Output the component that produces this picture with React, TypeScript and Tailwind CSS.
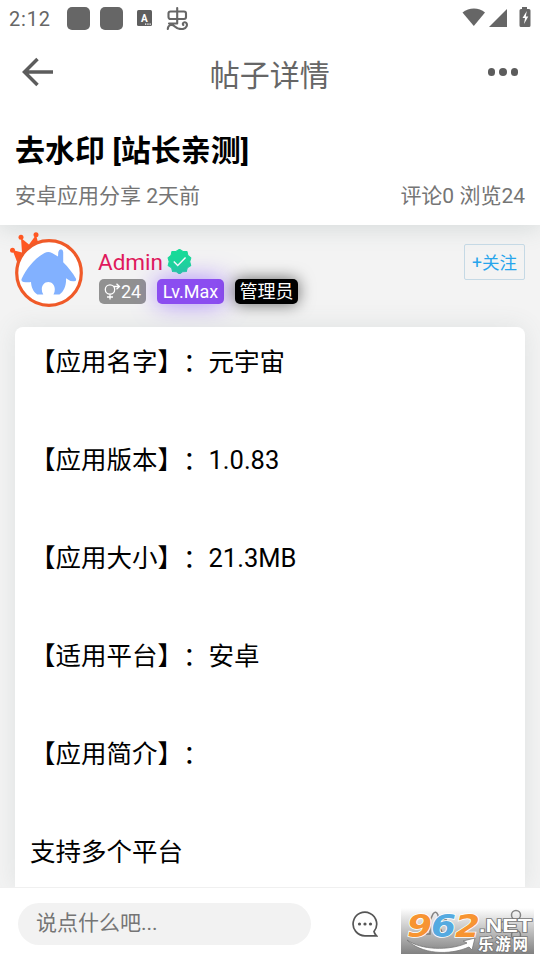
import { clsx } from "clsx"

const lines = [
  "【应用名字】：元宇宙",
  "【应用版本】：1.0.83",
  "【应用大小】：21.3MB",
  "【适用平台】：安卓",
  "【应用简介】：",
  "支持多个平台",
]

function StatusBar() {
  return (
    <div className="flex h-9 shrink-0 items-center justify-between pl-[9px] pr-[9px] text-[#666]">
      <div className="flex h-full items-center">
        <span className="w-[58px] pt-[1px] text-[20px] leading-none tracking-[0.8px]">2:12</span>
        <span className="size-[23px] rounded-[5px] bg-[#666]" />
        <span className="ml-[10px] size-[23px] rounded-[5px] bg-[#666]" />
        <svg className="ml-[14px]" width="15" height="16" viewBox="0 0 15 16">
          <rect width="15" height="16" rx="1.5" fill="#5e5e5e" />
          <text x="7.3" y="11.5" textAnchor="middle" fontSize="10" fontWeight="700" fill="#fff">A</text>
          <path d="M8 14.2h1.3M10.3 14.2h1.3M12.5 14.2h1.3" stroke="#fff" strokeWidth="1.2" />
        </svg>
        <svg className="ml-[14px]" width="24" height="24" viewBox="0 0 24 24" fill="none" stroke="#666" strokeWidth="2.1" strokeLinecap="round">
          <rect x="2.500" y="5.500" width="17.500" height="7.500" rx="2" />
          <path d="M11.200 2v15.500M3 17.500h8.200M1.800 23c.2-4 4-5.500 7-2.500 2 2 5 2.800 8 2.500 4-.4 5-4.500 3.300-6.200-1.800-1.500-4.300.5-2.800 2.200" />
        </svg>
      </div>
      <svg className="-mt-[2px]" width="70" height="24" viewBox="0 0 70 24" fill="#666">
        <path d="M1.500 7.500C8 2 18 2 24 7.500L12.800 21Z" />
        <path d="M46 4v18H28Z" />
        <path d="M61 4V2h5v2h2q1.500 0 1.500 1.500v15q0 1.500-1.500 1.500h-8q-1.500 0-1.500-1.500v-15Q58.500 4 60 4Z" />
        <path d="m65.800 6-4.300 7h2.500l-1 6 4.300-7.500h-2.500Z" fill="#fff" />
      </svg>
    </div>
  )
}

function Avatar() {
  return (
    <svg className="shrink-0" width="76" height="80" viewBox="0 0 76 80">
      <path d="M11 35 4.500 18l9.500 2.500L13 6l8 6.500L28 3l2.500 9L33 18Z" fill="#ff5722" />
      <circle cx="4.500" cy="18.300" r="2.500" fill="#ff5722" />
      <circle cx="13" cy="5.200" r="2.500" fill="#ff5722" />
      <circle cx="28" cy="2.800" r="2.500" fill="#ff5722" />
      <circle cx="41" cy="41" r="32.300" fill="#fff" stroke="#f05a28" strokeWidth="3.200" />
      <path
        d="M36.500 21q3.800-2 7.500 0l6 3.500.3-4.500q.7-2.800 2.700-2.800t2.200 2.800V30.300c5 5 9.500 10.500 12.800 16.500q.7 2.400-2 2.500-4 .3-8-3c.5 7-2 13-6.500 16.300h-6q1.300-1.500 1.300-5.300c0-4-2.500-7.300-6.500-7.300s-6.500 3.300-6.500 7.300q0 3.800 1.500 5.300h-6c-4.500-3-6-8-6.300-12.500q-4 .5-7.500-.2-3-.5-1.700-3.300C18 37 27 26 36.500 21Z"
        fill="#82b1ff"
      />
    </svg>
  )
}

function VerifiedBadge() {
  return (
    <svg width="25" height="25" viewBox="0 0 24 24">
      <path
        d="m12 .3 3.300 2 3.900.1.800 3.700 2.900 2.500-1.100 3.600 1 3.700-3.300 2.200-1 3.600-3.900.2-2.600 2.100-2.700-2.100-3.900-.2-1-3.600-3.300-2.200 1-3.700L1 8.600l2.900-2.500.8-3.700 3.900-.1Z"
        fill="#19db98"
        stroke="#19db98"
        strokeLinejoin="round"
      />
      <path d="m6.500 12 3.800 3.800 7.500-7.600" fill="none" stroke="#fff" strokeWidth="1.400" />
    </svg>
  )
}

function GenderIcon() {
  return (
    <svg width="17" height="18" viewBox="0 0 17 18" fill="none" stroke="#fff" strokeWidth="1.300">
      <circle cx="6" cy="6.500" r="4.700" />
      <path d="M6 11.200v5.300M3 14h6M9.500 3.500H15M12.500.700l3 2.800-3 2.800" />
    </svg>
  )
}

function Watermark() {
  return (
    <svg className="absolute left-[401px] top-[908px] overflow-visible" width="133" height="46" viewBox="0 0 133 46">
      <defs>
        <linearGradient id="shade" x1="0" y1="0" x2="0" y2="1">
          <stop offset="0" stopColor="#6b6b6b" stopOpacity="0" />
          <stop offset="1" stopColor="#6b6b6b" stopOpacity="0.850" />
        </linearGradient>
      </defs>
      <g fill="none" stroke="#888" strokeWidth="1.500">
        <path d="M24 24 32 6q3-4 5 1v4l9 1M25 26h4v-8M41 24l-3-6" />
        <circle cx="115" cy="7" r="4.500" />
        <circle cx="103" cy="18" r="4.500" />
        <circle cx="115" cy="27" r="4.500" />
      </g>
      <rect width="133" height="46" fill="url(#shade)" />
      <g fontFamily="DejaVu Sans" fontWeight="700" fontStyle="italic" fontSize="32" stroke="#fff" strokeWidth="1.600" paintOrder="stroke">
        <text x="6" y="29" fill="#f79432" textLength="25" lengthAdjust="spacingAndGlyphs">9</text>
        <text x="30" y="29" fill="#55aae0" textLength="25" lengthAdjust="spacingAndGlyphs">6</text>
        <text x="54" y="29" fill="#f79432" textLength="25" lengthAdjust="spacingAndGlyphs">2</text>
      </g>
      <path d="M6 32C20 42 48 43 66 35l-4-2 12-3-3 12-3-3C48 48 20 46 6 32Z" fill="#fff" stroke="#777" strokeWidth=".8" />
      <g fill="#fff" stroke="#777" strokeWidth="1.600" paintOrder="stroke" fontWeight="700">
        <text x="78" y="24" fontFamily="Liberation Sans" fontSize="18.500" textLength="53" lengthAdjust="spacingAndGlyphs">.NET</text>
        <text x="77" y="41.500" fontFamily="Noto Sans CJK SC" fontSize="15.500" textLength="50">乐游网</text>
      </g>
    </svg>
  )
}

export default function App() {
  return (
    <div className="relative flex h-[960px] w-[540px] flex-col overflow-hidden bg-[#f3f3f3] font-['Roboto','Noto_Sans_CJK_SC',sans-serif] text-black [text-spacing-trim:space-all]">
      <header className="relative z-10 flex h-[225px] shrink-0 flex-col bg-white shadow-[0_3px_22px_rgba(80,105,105,0.18)]">
        <StatusBar />
        <div className="flex h-[72px] items-center justify-between pl-[22px] pr-[22px]">
          <svg width="32" height="30" viewBox="0 0 32 30" fill="none" stroke="#5c5c5c" strokeWidth="3.500">
            <path d="M31 15H3.500M15.500 2 2.500 15l13 13" />
          </svg>
          <h1 className="-ml-[2px] pt-[7px] text-[30px] leading-none text-[#666]">帖子详情</h1>
          <div className="flex gap-[4px]">
            <span className="size-[7.500px] rounded-full bg-[#5c5c5c]" />
            <span className="size-[7.500px] rounded-full bg-[#5c5c5c]" />
            <span className="size-[7.500px] rounded-full bg-[#5c5c5c]" />
          </div>
        </div>
        <div className="px-[15px] pt-[27px]">
          <h2 className="text-[30px] font-bold leading-[32px]">去水印 [站长亲测]</h2>
          <div className="mt-[17px] flex justify-between text-[21px] leading-[24px] text-[#757575]">
            <span>安卓应用分享 2天前</span>
            <span>评论0 浏览24</span>
          </div>
        </div>
      </header>

      <main className="relative z-20 flex min-h-0 flex-1 flex-col px-[15px]">
        <section className="flex h-[102px] shrink-0">
          <div className="-ml-[7px] pt-[7px]">
            <Avatar />
          </div>
          <div className="ml-[14px] flex-1 pt-[24px]">
            <div className="flex h-[26px] items-center">
              <span className="w-[69px] text-[22.500px] leading-none text-[#e0195c]">Admin</span>
              <span className="-mt-[2px]">
                <VerifiedBadge />
              </span>
            </div>
            <div className="mt-[4px] flex items-center text-[18px] leading-[25px] text-white">
              <span className="ml-[1px] flex h-[25px] w-[47px] items-center rounded-[5px] bg-[#919191] pl-[5px]">
                <GenderIcon />
                24
              </span>
              <span className="ml-[11px] h-[25px] w-[67px] rounded-[5px] bg-[#8b4df0] text-center shadow-[0_0_24px_rgba(124,65,255,0.6)]">Lv.Max</span>
              <span className="ml-[11px] h-[25px] w-[63px] rounded-[5px] bg-black text-center shadow-[0_0_16px_rgba(0,0,0,0.6)]">管理员</span>
            </div>
          </div>
          <button className="mt-[19px] h-[36px] w-[61px] rounded-[2px] border border-[#c5d9e5] pt-[1px] text-[17.500px] leading-[35px] text-[#27a5ec]">+关注</button>
        </section>
        <article className="flex-1 rounded-t-[8px] bg-white px-[15px] pt-[16px] shadow-[0_0_24px_rgba(80,105,105,0.12)]">
          {lines.map((line, i) => (
            <p key={line} className={clsx("h-[38px] whitespace-nowrap text-[25.500px] leading-[38px]", i > 0 && "mt-[60px]")}>
              {line}
            </p>
          ))}
        </article>
      </main>

      <footer className="relative z-30 flex h-[73px] shrink-0 items-center border-t border-[#f0f0f0] bg-white pb-[1px] pl-[18px]">
        <div className="h-[42px] w-[293px] rounded-full bg-[#f2f2f2] pl-[18px] text-[21px] leading-[40px] text-[#757575]">说点什么吧...</div>
        <svg className="ml-[41px]" width="26" height="26" viewBox="0 0 26 26" fill="none" stroke="#555" strokeWidth="1.700">
          <path d="M22 20.500A11.800 11.800 0 1 0 13 24.800h11.500Q22.500 23 22 20.500Z" />
          <g fill="#555" stroke="none">
            <circle cx="7.500" cy="13" r="1.600" />
            <circle cx="13" cy="13" r="1.600" />
            <circle cx="18.500" cy="13" r="1.600" />
          </g>
        </svg>
      </footer>
      <div className="pointer-events-none absolute inset-0 z-40">
        <Watermark />
      </div>
    </div>
  )
}
